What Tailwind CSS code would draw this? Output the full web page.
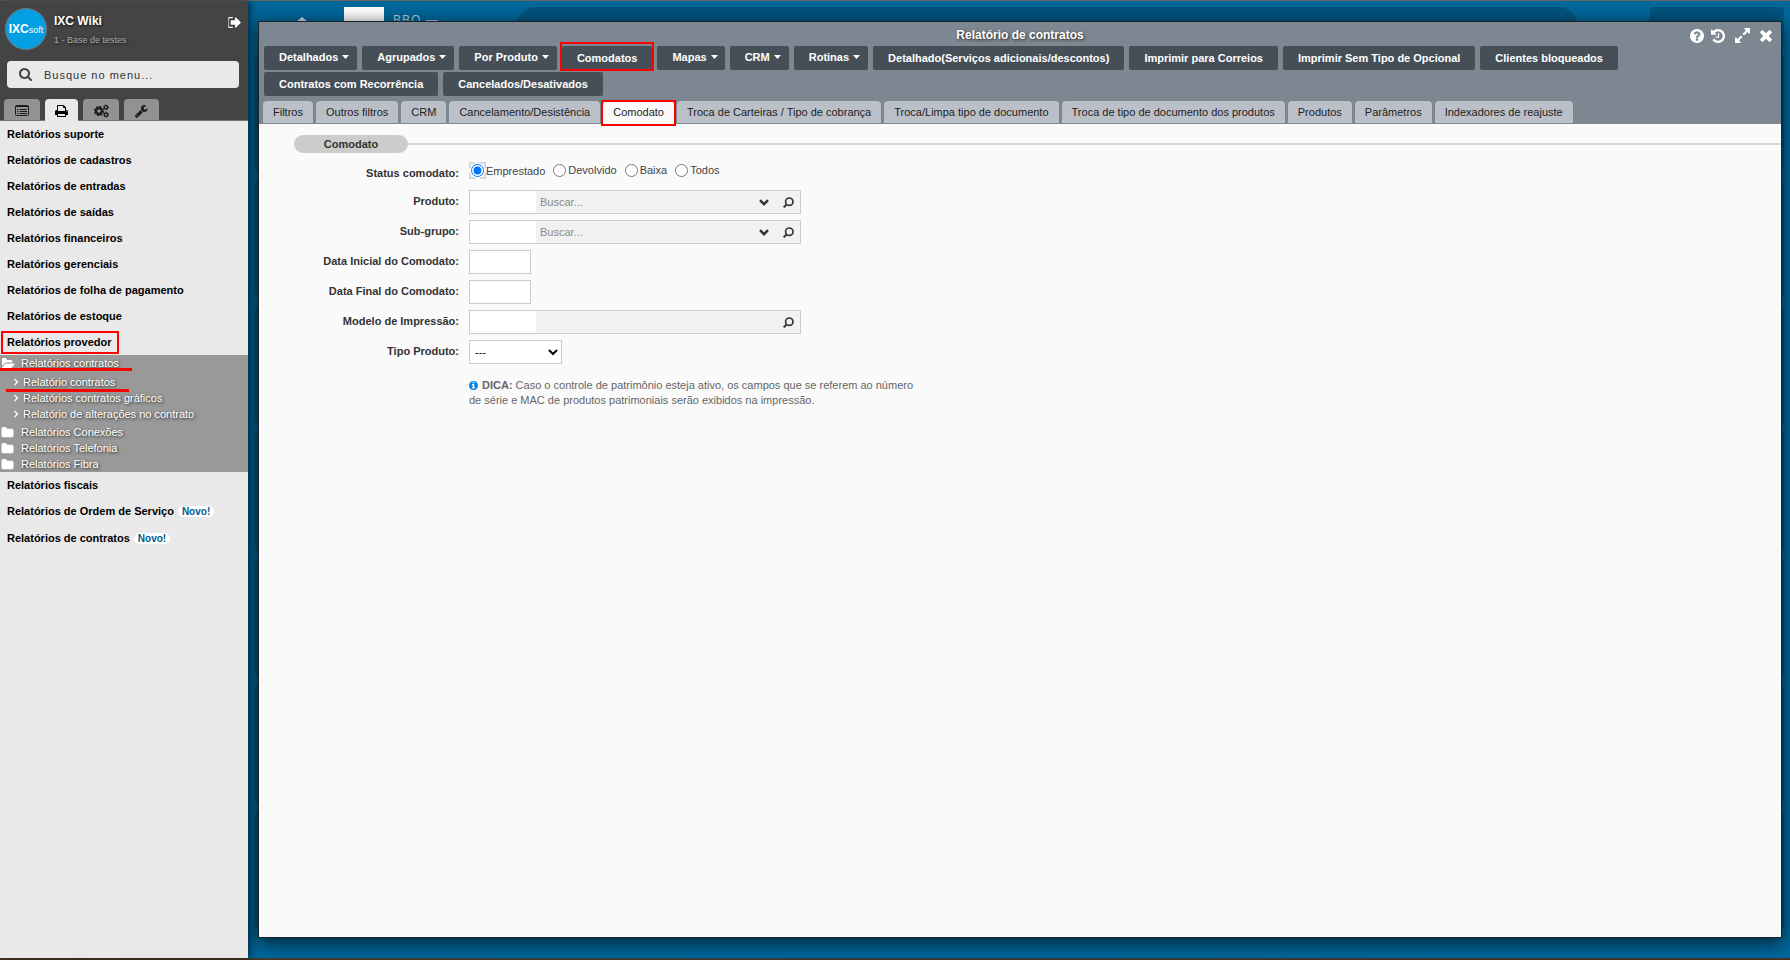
<!DOCTYPE html>
<html lang="pt-BR">
<head>
<meta charset="utf-8">
<title>Relatório de contratos</title>
<script src="https://cdn.jsdelivr.net/npm/@tailwindcss/browser@4"></script>
</head>
<body class="font-['Liberation_Sans',Arial,sans-serif] text-[11px] leading-4 text-[#333]">
<svg class="hidden" aria-hidden="true">
  <symbol id="folder" viewBox="0 0 1792 1792"><path d="M1728 608v704q0 92-66 158t-158 66h-1216q-92 0-158-66t-66-158v-960q0-92 66-158t158-66h320q92 0 158 66t66 158v32h672q92 0 158 66t66 158z"/></symbol>
  <symbol id="open" viewBox="0 0 1850 1792"><path d="M1815 952q0 31-31 66l-336 396q-43 51-120.500 86.500t-143.500 35.500h-1088q-34 0-60.500-13t-26.500-43q0-31 31-66l336-396q43-51 120.500-86.500t143.500-35.500h1088q34 0 60.500 13t26.500 43zm-343-344v160h-832q-94 0-197 47.500t-164 119.500l-337 396-5 6q0-4-.5-12.500t-.5-12.500v-960q0-92 66-158t158-66h320q92 0 158 66t66 158v32h544q92 0 158 66t66 158z"/></symbol>
  <symbol id="angle" viewBox="0 0 6 8"><path d="M1.500 1L4.500 4L1.500 7" fill="none" stroke="currentColor" stroke-width="1.300"/></symbol>
  <symbol id="caret" viewBox="0 0 7 4"><path d="M0 0h7L3.500 4z"/></symbol>
  <symbol id="chev" viewBox="0 0 10 7"><path d="M1 1.200L5 5.200L9 1.200" fill="none" stroke="currentColor" stroke-width="2.400"/></symbol>
  <symbol id="lens" viewBox="0 0 11 11"><path d="M3.300 7.700L.7 10.300" stroke="currentColor" stroke-width="2" fill="none"/><circle cx="6.300" cy="4.700" r="3.700" fill="none" stroke="currentColor" stroke-width="1.700"/></symbol>
</svg>

<div class="flex h-screen flex-col overflow-hidden bg-[#00689d]">
  <div class="h-px shrink-0 bg-[#666]"></div>
  <div class="flex min-h-0 flex-1">

    <aside class="relative z-10 flex w-62 shrink-0 flex-col bg-[#e9e9e9] shadow-[2px_0_8px_rgba(0,0,0,0.6)]">
      <header class="flex h-[120px] shrink-0 flex-col border-b border-[#777] bg-[#444]">
        <div class="flex h-[60px] items-start pt-[7px] pr-[7px] pl-[5px]">
          <div class="flex h-[42px] w-[42px] items-center justify-center rounded-full border border-[#777] bg-[#039fe3] text-white"><div class="flex items-baseline"><span class="text-xs font-bold">IXC</span><span class="text-[9px]">soft</span></div></div>
          <div class="flex-1 pt-[5px] pl-[7px] [text-shadow:1px_1px_3px_#111]">
            <div class="text-xs leading-4 font-bold text-white">IXC Wiki</div>
            <div class="pt-[3px] text-[9px] leading-4 text-[#aaa]">1 - Base de testes</div>
          </div>
          <button type="button" aria-label="Sair" class="mt-2 text-white"><svg class="size-[13px]" viewBox="128 128 1536 1536" fill="currentColor"><path d="M704 1440q0 4 1 20t.5 26.500-3 23.500-10 19.500-20.500 6.500h-320q-119 0-203.500-84.500t-84.500-203.500v-704q0-119 84.500-203.500t203.500-84.500h320q13 0 22.500 9.500t9.500 22.500q0 4 1 20t.5 26.500-3 23.500-10 19.500-20.500 6.500h-320q-66 0-113 47t-47 113v704q0 66 47 113t113 47h312l11.500 1 11.500 3 8 5.500 7 9 2 13.500zm928-544q0 26-19 45l-544 544q-19 19-45 19t-45-19-19-45v-288h-448q-26 0-45-19t-19-45v-384q0-26 19-45t45-19h448v-288q0-26 19-45t45-19 45 19l544 544q19 19 19 45z"/></svg></button>
        </div>
        <div class="mr-[9px] ml-[7px] flex h-[27px] shrink-0 items-center rounded bg-[#e9e9e9] pl-3">
          <svg class="size-[13px]" viewBox="64 128 1664 1664" fill="#444"><path d="M1216 832q0-185-131.500-316.500t-316.500-131.500-316.500 131.500-131.500 316.500 131.500 316.500 316.500 131.500 316.500-131.500 131.500-316.500zm512 832q0 52-38 90t-90 38q-54 0-90-38l-343-342q-179 124-399 124-143 0-273.500-55.500t-225-150-150-225-55.500-273.500 55.500-273.500 150-225 225-150 273.500-55.500 273.500 55.500 225 150 150 225 55.500 273.500q0 220-124 399l343 343q37 37 37 90z"/></svg>
          <input type="text" aria-label="Busque no menu" placeholder="Busque no menu..." class="ml-3 h-full min-w-0 flex-1 text-[11px] tracking-[1px] outline-none placeholder:text-[#333]">
        </div>
        <nav class="mt-auto flex gap-[5px] pl-1" aria-label="Módulos">
          <button type="button" aria-label="Cadastros" class="flex h-[21px] w-9 items-center justify-center rounded-t bg-[#929292] pt-px"><svg class="h-[11px] w-[14px]" viewBox="0 0 14 11" fill="none" stroke="#1c1c1c"><rect x=".5" y=".5" width="13" height="10" rx="1"/><path d="M.5 1.500h13M2 4.500h1.300M4.500 4.500H12M2 6.500h1.300M4.500 6.500H12M2 8.500h1.300M4.500 8.500H12"/></svg></button>
          <button type="button" aria-label="Relatórios" class="-mb-px flex h-[22px] w-[33px] items-center justify-center rounded-t bg-[#e9e9e9] pt-[2px]"><svg class="size-[13px]" viewBox="64 128 1664 1664" fill="#000"><path d="M448 1536h896v-256h-896v256zm0-640h896v-384h-160q-40 0-68-28t-28-68v-160h-640v640zm1152 64q0-26-19-45t-45-19-45 19-19 45 19 45 45 19 45-19 19-45zm128 0v416q0 13-9.500 22.500t-22.500 9.500h-224v160q0 40-28 68t-68 28h-960q-40 0-68-28t-28-68v-160h-224q-13 0-22.500-9.500t-9.500-22.500v-416q0-79 56.500-135.500t135.500-56.500h64v-544q0-40 28-68t68-28h672q40 0 88 20t76 48l152 152q28 28 48 76t20 88v256h64q79 0 135.500 56.500t56.500 135.500z"/></svg></button>
          <button type="button" aria-label="Configurações" class="flex h-[21px] w-9 items-center justify-center rounded-t bg-[#929292] pt-[2px]"><svg class="h-[14px] w-[15px]" viewBox="0 0 15 14" fill="none" stroke="#1c1c1c"><circle cx="5" cy="7" r="3" stroke-width="2.400"/><circle cx="5" cy="7" r="4.600" stroke-width="1.200" stroke-dasharray="1.900 1.710"/><circle cx="12" cy="3.300" r="1.700" stroke-width="1.300"/><circle cx="12" cy="3.300" r="2.500" stroke-width=".9" stroke-dasharray="1.200 1.420"/><circle cx="12" cy="10.700" r="1.700" stroke-width="1.300"/><circle cx="12" cy="10.700" r="2.500" stroke-width=".9" stroke-dasharray="1.200 1.420"/></svg></button>
          <button type="button" aria-label="Ferramentas" class="flex h-[21px] w-[35px] items-center justify-center rounded-t bg-[#929292] pt-[3px]"><svg class="size-[13px]" viewBox="85 128 1664 1664" fill="#1c1c1c"><path d="M448 1472q0-26-19-45t-45-19-45 19-19 45 19 45 45 19 45-19 19-45zm644-420l-682 682q-37 37-90 37-52 0-91-37l-106-108q-38-36-38-90 0-53 38-91l681-681q39 98 114.500 173.500t173.500 114.500zm634-435q0 39-23 106-47 134-164.500 217.500t-258.500 83.500q-185 0-316.500-131.500t-131.500-316.500 131.500-316.500 316.500-131.500q58 0 121.500 16.500t107.500 46.500q16 11 16 28t-16 28l-293 169v224l193 107q5-3 79-48.500t135.500-81 70.500-35.500q15 0 23.500 10t8.500 25z"/></svg></button>
        </nav>
      </header>

      <nav class="flex flex-col text-black" aria-label="Relatórios">
        <a href="#" class="flex h-[26px] items-center pl-[7px] font-bold">Relatórios suporte</a>
        <a href="#" class="flex h-[26px] items-center pl-[7px] font-bold">Relatórios de cadastros</a>
        <a href="#" class="flex h-[26px] items-center pl-[7px] font-bold">Relatórios de entradas</a>
        <a href="#" class="flex h-[26px] items-center pl-[7px] font-bold">Relatórios de saídas</a>
        <a href="#" class="flex h-[26px] items-center pl-[7px] font-bold">Relatórios financeiros</a>
        <a href="#" class="flex h-[26px] items-center pl-[7px] font-bold">Relatórios gerenciais</a>
        <a href="#" class="flex h-[26px] items-center pl-[7px] font-bold">Relatórios de folha de pagamento</a>
        <a href="#" class="flex h-[26px] items-center pl-[7px] font-bold">Relatórios de estoque</a>
        <a href="#" class="relative flex h-[26px] items-center pl-[7px] font-bold">Relatórios provedor<span class="absolute top-[2px] left-px h-[23px] w-[118px] border-2 border-[red]"></span></a>
        <div class="flex h-[117px] flex-col bg-[#999] text-white [text-shadow:1px_1px_3px_#222]">
          <a href="#" class="relative flex h-[19px] items-center pb-[3px] pl-[2px]"><svg class="mr-[6px] size-[13px] fill-white"><use href="#open"/></svg>Relatórios contratos<span class="absolute top-[13px] left-0 h-[3px] w-[132px] bg-[red]"></span></a>
          <a href="#" class="relative flex h-4 items-center pl-[13px]"><svg class="mr-1 h-2 w-[6px]"><use href="#angle"/></svg>Relatório contratos<span class="absolute top-[15px] left-[6px] h-[3px] w-[123px] bg-[red]"></span></a>
          <a href="#" class="flex h-4 items-center pl-[13px]"><svg class="mr-1 h-2 w-[6px]"><use href="#angle"/></svg>Relatórios contratos gráficos</a>
          <a href="#" class="mb-[2px] flex h-4 items-center pl-[13px]"><svg class="mr-1 h-2 w-[6px]"><use href="#angle"/></svg>Relatório de alterações no contrato</a>
          <a href="#" class="flex h-4 items-center pl-px"><svg class="mr-[7px] size-[13px] fill-white"><use href="#folder"/></svg>Relatórios Conexões</a>
          <a href="#" class="flex h-4 items-center pl-px"><svg class="mr-[7px] size-[13px] fill-white"><use href="#folder"/></svg>Relatórios Telefonia</a>
          <a href="#" class="flex h-4 items-center pl-px"><svg class="mr-[7px] size-[13px] fill-white"><use href="#folder"/></svg>Relatórios Fibra</a>
        </div>
        <a href="#" class="flex h-[26px] items-center pl-[7px] font-bold">Relatórios fiscais</a>
        <a href="#" class="flex h-[26px] items-center pl-[7px] font-bold">Relatórios de Ordem de Serviço<span class="ml-1 rounded-full bg-white px-1 text-[10px] leading-[11px] text-[#005b8f]">Novo!</span></a>
        <a href="#" class="flex h-7 items-center pl-[7px] font-bold">Relatórios de contratos<span class="ml-1 rounded-full bg-white px-1 text-[10px] leading-[11px] text-[#005b8f]">Novo!</span></a>
      </nav>
    </aside>

    <main class="relative min-w-0 flex-1">
      <!-- desktop behind the window -->
      <div class="flex h-full flex-col pt-[6px] pr-[6px] pb-7 pl-[7px]" aria-hidden="true">
        <div class="mb-[6px] flex h-10 shrink-0 items-start">
          <svg class="mt-[10px] ml-[41px] h-2 w-3 fill-white/80" viewBox="0 0 12 8"><path d="M6 0L12 5H9V8H3V5H0z"/></svg>
          <div class="ml-[36px] size-10 bg-white"></div>
          <div class="ml-[9px] pt-[5px] text-xs tracking-[1px] text-white/70">BBO —</div>
          <div class="ml-[77px] h-10 flex-1 rounded-full bg-[#005580]"></div>
          <div class="ml-[72px] h-10 w-[134px] rounded bg-[#005580]"></div>
        </div>
        <div class="grid min-h-0 flex-1 grid-rows-7 gap-[6px]">
          <div class="rounded-md bg-[#005580]"></div><div class="rounded-md bg-[#005580]"></div><div class="rounded-md bg-[#005580]"></div><div class="rounded-md bg-[#005580]"></div><div class="rounded-md bg-[#005580]"></div><div class="rounded-md bg-[#005580]"></div><div class="rounded-md bg-[#005580]"></div>
        </div>
      </div>

      <section class="absolute top-5 right-2 bottom-5 left-[10px] flex flex-col border border-[#1c2226] bg-[#fafafa] shadow-[0_4px_18px_rgba(0,0,0,0.75)]">
        <header class="bg-[#7d8791]">
          <div class="relative flex h-6 items-center justify-center pt-px">
            <h1 class="text-xs font-bold text-white [text-shadow:1px_1px_3px_#222]">Relatório de contratos</h1>
            <div class="absolute top-[6px] right-[9px] flex items-center gap-[10px] text-white">
              <button type="button" aria-label="Ajuda"><svg class="block size-[14px]" viewBox="128 128 1536 1536" fill="currentColor"><path d="M1024 1376v-192q0-14-9-23t-23-9h-192q-14 0-23 9t-9 23v192q0 14 9 23t23 9h192q14 0 23-9t9-23zm256-672q0-88-55.500-163t-138.500-116-170-41q-243 0-371 213-15 24 8 42l132 100q7 6 19 6 16 0 25-12 53-68 86-92 34-24 86-24 48 0 85.500 26t37.500 59q0 38-20 61t-68 45q-63 28-115.500 86.500t-52.500 125.500v36q0 14 9 23t23 9h192q14 0 23-9t9-23q0-19 21.500-49.500t54.500-49.500q32-18 49-28.500t46-35 44.500-48 28-60.500 12.500-81zm384 192q0 209-103 385.500t-279.500 279.500-385.500 103-385.500-103-279.500-279.500-103-385.500 103-385.500 279.500-279.500 385.500-103 385.500 103 279.500 279.500 103 385.500z"/></svg></button>
              <button type="button" aria-label="Histórico" class="-ml-[3px]"><svg class="block size-[14px]" viewBox="128 128 1536 1536" fill="currentColor"><path d="M1664 896q0 156-61 298t-164 245-245 164-298 61q-172 0-327-72.500t-264-204.500q-7-10-6.500-22.500t8.500-20.500l137-138q10-9 25-9 16 2 23 12 73 95 179 147t225 52q104 0 198.500-40.500t163.500-109.500 109.500-163.500 40.500-198.500-40.500-198.500-109.500-163.500-163.500-109.500-198.500-40.500q-98 0-188 35.500t-160 101.500l137 138q31 30 14 69-17 40-59 40h-448q-26 0-45-19t-19-45v-448q0-42 40-59 39-17 69 14l130 129q107-101 244.500-156.500t284.500-55.500q156 0 298 61t245 164 164 245 61 298zm-640-288v448q0 14-9 23t-23 9h-320q-14 0-23-9t-9-23v-64q0-14 9-23t23-9h224v-352q0-14 9-23t23-9h64q14 0 23 9t9 23z"/></svg></button>
              <button type="button" aria-label="Expandir"><svg class="block size-[15px]" viewBox="128 128 1536 1536" fill="currentColor"><path d="M883 1056q0 13-10 23l-332 332 144 144q19 19 19 45t-19 45-45 19h-448q-26 0-45-19t-19-45v-448q0-26 19-45t45-19 45 19l144 144 332-332q10-10 23-10t23 10l114 114q10 10 10 23zm781-864v448q0 26-19 45t-45 19-45-19l-144-144-332 332q-10 10-23 10t-23-10l-114-114q-10-10-10-23t10-23l332-332-144-144q-19-19-19-45t19-45 45-19h448q26 0 45 19t19 45z"/></svg></button>
              <button type="button" aria-label="Fechar"><svg class="block size-3" viewBox="290 354 1212 1212" fill="currentColor"><path d="M1490 1322q0 40-28 68l-136 136q-28 28-68 28t-68-28l-294-294-294 294q-28 28-68 28t-68-28l-136-136q-28-28-28-68t28-68l294-294-294-294q-28-28-28-68t28-68l136-136q28-28 68-28t68 28l294 294 294-294q28-28 68-28t68 28l136 136q28 28 28 68t-28 68l-294 294 294 294q28 28 28 68z"/></svg></button>
            </div>
          </div>
          <div class="flex flex-wrap gap-x-[5px] gap-y-[2px] px-[5px] font-bold text-white">
            <button type="button" class="flex h-6 items-center gap-1 rounded-xs bg-[#464f58] pr-2 pb-[2px] pl-[15px]">Detalhados<svg class="h-1 w-[7px] fill-white"><use href="#caret"/></svg></button>
            <button type="button" class="flex h-6 items-center gap-1 rounded-xs bg-[#464f58] pr-2 pb-[2px] pl-[15px]">Agrupados<svg class="h-1 w-[7px] fill-white"><use href="#caret"/></svg></button>
            <button type="button" class="flex h-6 items-center gap-1 rounded-xs bg-[#464f58] pr-2 pb-[2px] pl-[15px]">Por Produto<svg class="h-1 w-[7px] fill-white"><use href="#caret"/></svg></button>
            <button type="button" class="relative h-6 rounded-xs bg-[#464f58] px-[15px]">Comodatos<span class="absolute -inset-x-[2px] -top-1 -bottom-px border-2 border-[red]"></span></button>
            <button type="button" class="flex h-6 items-center gap-1 rounded-xs bg-[#464f58] pr-[7px] pb-[2px] pl-[15px]">Mapas<svg class="h-1 w-[7px] fill-white"><use href="#caret"/></svg></button>
            <button type="button" class="flex h-6 items-center gap-1 rounded-xs bg-[#464f58] pr-2 pb-[2px] pl-[15px]">CRM<svg class="h-1 w-[7px] fill-white"><use href="#caret"/></svg></button>
            <button type="button" class="flex h-6 items-center gap-1 rounded-xs bg-[#464f58] pr-2 pb-[2px] pl-[15px]">Rotinas<svg class="h-1 w-[7px] fill-white"><use href="#caret"/></svg></button>
            <button type="button" class="h-6 rounded-xs bg-[#464f58] px-[15px]">Detalhado(Serviços adicionais/descontos)</button>
            <button type="button" class="h-6 rounded-xs bg-[#464f58] px-[15px]">Imprimir para Correios</button>
            <button type="button" class="h-6 rounded-xs bg-[#464f58] px-[15px]">Imprimir Sem Tipo de Opcional</button>
            <button type="button" class="h-6 rounded-xs bg-[#464f58] px-[15px]">Clientes bloqueados</button>
            <button type="button" class="h-6 rounded-xs bg-[#464f58] px-[15px]">Contratos com Recorrência</button>
            <button type="button" class="h-6 rounded-xs bg-[#464f58] px-[15px]">Cancelados/Desativados</button>
          </div>
          <div class="mt-[5px] flex gap-[3px] pb-px pl-1 text-[#222]">
            <button type="button" class="h-[22px] rounded-t bg-[#bbc0c8] px-[10px]">Filtros</button>
            <button type="button" class="h-[22px] rounded-t bg-[#bbc0c8] px-[10px]">Outros filtros</button>
            <button type="button" class="h-[22px] rounded-t bg-[#bbc0c8] px-[10px]">CRM</button>
            <button type="button" class="h-[22px] rounded-t bg-[#bbc0c8] px-[10px]">Cancelamento/Desistência</button>
            <button type="button" class="relative -mb-px h-[23px] rounded-t bg-[#fafafa] px-[10px] pb-px">Comodato<span class="absolute -inset-x-[2px] -top-px -bottom-[2px] border-2 border-[red]"></span></button>
            <button type="button" class="h-[22px] rounded-t bg-[#bbc0c8] px-[10px]">Troca de Carteiras / Tipo de cobrança</button>
            <button type="button" class="h-[22px] rounded-t bg-[#bbc0c8] px-[10px]">Troca/Limpa tipo de documento</button>
            <button type="button" class="h-[22px] rounded-t bg-[#bbc0c8] px-[10px]">Troca de tipo de documento dos produtos</button>
            <button type="button" class="h-[22px] rounded-t bg-[#bbc0c8] px-[10px]">Produtos</button>
            <button type="button" class="h-[22px] rounded-t bg-[#bbc0c8] px-[10px]">Parâmetros</button>
            <button type="button" class="h-[22px] rounded-t bg-[#bbc0c8] px-[10px]">Indexadores de reajuste</button>
          </div>
        </header>

        <div class="flex items-center pt-[11px] pl-[35px]">
          <h2 class="w-[114px] rounded-full bg-[#ccc] text-center leading-[18px] font-bold">Comodato</h2>
          <div class="h-[2px] flex-1 bg-[#d9d9d9]"></div>
        </div>

        <form class="grid grid-cols-[200px_1fr] gap-x-[10px] gap-y-[6px] pt-[7px]">
          <span id="st" class="pt-[5px] text-right font-bold">Status comodato:</span>
          <div role="radiogroup" aria-labelledby="st" class="flex h-6 items-start gap-2 pt-[2px] text-[#444]">
            <label class="flex items-center"><span class="relative flex size-[17px] items-center justify-center"><svg class="absolute inset-0 size-[17px]" viewBox="0 0 17 17" fill="none" stroke="#cfdbe1" stroke-width="4"><path d="M0 6V0H6M11 0H17V6M17 11V17H11M6 17H0V11"/></svg><input type="radio" name="status" checked class="relative size-[13px]"></span>Emprestado</label>
            <label class="flex items-center gap-[2px]"><input type="radio" name="status" class="size-[13px]">Devolvido</label>
            <label class="flex items-center gap-[2px]"><input type="radio" name="status" class="size-[13px]">Baixa</label>
            <label class="flex items-center gap-[2px]"><input type="radio" name="status" class="size-[13px]">Todos</label>
          </div>

          <label for="produto" class="pt-[3px] text-right font-bold">Produto:</label>
          <div class="flex h-6 w-[332px] border border-[#ccc] bg-[#f1f1f1]">
            <input id="produto" type="text" class="w-[66px] bg-white px-1 outline-none">
            <input type="text" aria-label="Buscar produto" placeholder="Buscar..." class="min-w-0 flex-1 px-1 outline-none placeholder:text-[#888]">
            <button type="button" aria-label="Abrir lista de produtos" class="w-6"><svg class="mx-auto h-[7px] w-[10px]"><use href="#chev"/></svg></button>
            <button type="button" aria-label="Pesquisar produto" class="w-6"><svg class="mx-auto size-[11px]"><use href="#lens"/></svg></button>
          </div>

          <label for="subgrupo" class="pt-[3px] text-right font-bold">Sub-grupo:</label>
          <div class="flex h-6 w-[332px] border border-[#ccc] bg-[#f1f1f1]">
            <input id="subgrupo" type="text" class="w-[66px] bg-white px-1 outline-none">
            <input type="text" aria-label="Buscar sub-grupo" placeholder="Buscar..." class="min-w-0 flex-1 px-1 outline-none placeholder:text-[#888]">
            <button type="button" aria-label="Abrir lista de sub-grupos" class="w-6"><svg class="mx-auto h-[7px] w-[10px]"><use href="#chev"/></svg></button>
            <button type="button" aria-label="Pesquisar sub-grupo" class="w-6"><svg class="mx-auto size-[11px]"><use href="#lens"/></svg></button>
          </div>

          <label for="inicial" class="pt-[3px] text-right font-bold">Data Inicial do Comodato:</label>
          <input id="inicial" type="text" class="h-6 w-[62px] border border-[#ccc] bg-white px-1">

          <label for="final" class="pt-[3px] text-right font-bold">Data Final do Comodato:</label>
          <input id="final" type="text" class="h-6 w-[62px] border border-[#ccc] bg-white px-1">

          <label for="modelo" class="pt-[3px] text-right font-bold">Modelo de Impressão:</label>
          <div class="flex h-6 w-[332px] border border-[#ccc] bg-[#f1f1f1]">
            <input id="modelo" type="text" class="w-[66px] bg-white px-1 outline-none">
            <input type="text" aria-label="Buscar modelo" class="min-w-0 flex-1 px-1 outline-none">
            <button type="button" aria-label="Pesquisar modelo" class="w-6"><svg class="mx-auto size-[11px]"><use href="#lens"/></svg></button>
          </div>

          <label for="tipo" class="pt-[3px] text-right font-bold">Tipo Produto:</label>
          <select id="tipo" class="h-6 w-[93px] border border-[#ccc] bg-white pl-px text-black"><option>---</option></select>

          <p class="col-start-2 mt-2 max-w-[450px] leading-[15px] text-[#666]"><svg class="mr-1 mb-[2px] inline-block size-[9px]" viewBox="128 128 1536 1536" fill="#0a84e0"><path d="M1152 1376v-160q0-14-9-23t-23-9h-96v-512q0-14-9-23t-23-9h-320q-14 0-23 9t-9 23v160q0 14 9 23t23 9h96v320h-96q-14 0-23 9t-9 23v160q0 14 9 23t23 9h448q14 0 23-9t9-23zm-128-896v-160q0-14-9-23t-23-9h-192q-14 0-23 9t-9 23v160q0 14 9 23t23 9h192q14 0 23-9t9-23zm640 416q0 209-103 385.500t-279.500 279.500-385.500 103-385.500-103-279.500-279.500-103-385.500 103-385.500 279.500-279.500 385.500-103 385.500 103 279.500 279.500 103 385.500z"/></svg><b>DICA:</b> Caso o controle de patrimônio esteja ativo, os campos que se referem ao número de série e MAC de produtos patrimoniais serão exibidos na impressão.</p>
        </form>
      </section>
    </main>
  </div>
  <div class="h-[2px] shrink-0 bg-linear-to-r from-[#4b3a22] via-[#3a3a3a] to-[#4a3220]"></div>
</div>
</body>
</html>
